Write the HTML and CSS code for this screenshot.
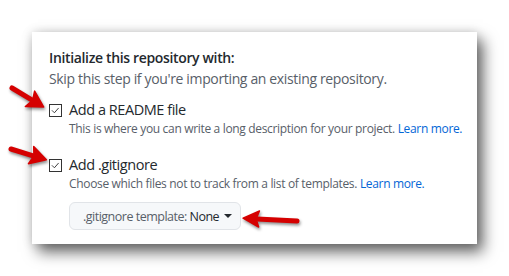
FILE: index.html
```html
<!DOCTYPE html>
<html>
<head>
<meta charset="utf-8">
<link rel="stylesheet" href="styles.css">
</head>
<body>
<div class="stage">
  <section class="panel">
    <h3 class="title">Initialize this repository with:</h3>
    <p class="sub">Skip this step if you're importing an existing repository.</p>
    <div class="option">
      <label class="option-row"><span class="box"><svg viewBox="0 0 13 13" width="13" height="13"><path d="M2.3 6.3 L5.2 9.2 L10.2 3.5" fill="none" stroke="#333" stroke-width="1.1"/></svg></span><span class="label">Add a README file</span></label>
      <p class="note">This is where you can write a long description for your project. <a href="#">Learn more.</a></p>
    </div>
    <div class="option option-second">
      <label class="option-row"><span class="box"><svg viewBox="0 0 13 13" width="13" height="13"><path d="M2.3 6.3 L5.2 9.2 L10.2 3.5" fill="none" stroke="#333" stroke-width="1.1"/></svg></span><span class="label">Add .gitignore</span></label>
      <p class="note">Choose which files not to track from a list of templates. <a href="#">Learn more.</a></p>
      <button class="select"><span class="muted">.gitignore template:</span> None <span class="caret"></span></button>
    </div>
  </section>
  <svg class="arrows" width="509" height="276" viewBox="0 0 509 276">
    <g transform="translate(12 88) rotate(31)">
      <path d="M0 0 L24 0" stroke="#d50000" stroke-width="5" stroke-linecap="round"/>
      <path d="M37 0 L21 -9 L24 0 L21 9 Z" fill="#d50000" stroke="#d50000" stroke-width="1.5" stroke-linejoin="round"/>
    </g>
    <g transform="translate(11 149) rotate(17)">
      <path d="M0 0 L24 0" stroke="#d50000" stroke-width="5" stroke-linecap="round"/>
      <path d="M37 0 L21 -9 L24 0 L21 9 Z" fill="#d50000" stroke="#d50000" stroke-width="1.5" stroke-linejoin="round"/>
    </g>
    <g transform="translate(297 221) rotate(183)">
      <path d="M0 0 L40 0" stroke="#d50000" stroke-width="5" stroke-linecap="round"/>
      <path d="M54 0 L38 -8 L41 0 L38 8 Z" fill="#d50000" stroke="#d50000" stroke-width="1.5" stroke-linejoin="round"/>
    </g>
  </svg>
</div>
</body>
</html>
```
FILE: styles.css
```css
html, body {
  margin: 0;
  padding: 0;
  background: #ffffff;
}
.stage {
  position: relative;
  width: 509px;
  height: 276px;
  padding: 32px;
  box-sizing: border-box;
  font-family: "Open Sans", "Noto Sans", sans-serif;
}
.panel {
  width: 445px;
  height: 212px;
  box-sizing: border-box;
  background: #fff;
  padding: 15px 17px 0;
  box-shadow: 6px 8px 14px rgba(0,0,0,0.6), 0 0 10px rgba(0,0,0,0.15);
}
.title {
  margin: 0;
  font-size: 14px;
  font-weight: 600;
  line-height: 21px;
  color: #24292e;
  letter-spacing: -0.35px;
}
.sub {
  margin: 0;
  font-size: 14px;
  line-height: 21px;
  color: #586069;
  letter-spacing: -0.35px;
}
.option {
  margin-top: 11px;
}
.option-second {
  margin-top: 17px;
}
.option-row {
  display: flex;
  align-items: center;
  gap: 7px;
  height: 20px;
}
.box {
  width: 13px;
  height: 13px;
  display: block;
}
.box svg {
  display: block;
  box-sizing: border-box;
  border: 1px solid #333;
  background: #fff;
}
.label {
  font-size: 14.5px;
  line-height: 20px;
  color: #24292e;
  letter-spacing: -0.45px;
}
.note {
  margin: 0 0 0 20px;
  font-size: 12px;
  line-height: 18px;
  color: #586069;
  letter-spacing: -0.33px;
  white-space: nowrap;
}
.note a {
  color: #0366d6;
  text-decoration: none;
}
.select {
  margin: 9px 0 0 20px;
  width: 172px;
  height: 28px;
  border: 1px solid #e1e4e8;
  border-radius: 6px;
  background: #f6f8fa;
  font-family: inherit;
  font-size: 12.5px;
  color: #24292e;
  letter-spacing: -0.5px;
  padding: 0 12px 0 13px;
  display: flex;
  align-items: center;
  white-space: pre;
}
.muted {
  color: #586069;
}
.caret {
  display: inline-block;
  width: 0;
  height: 0;
  border-left: 4px solid transparent;
  border-right: 4px solid transparent;
  border-top: 4px solid #24292e;
  margin-left: 2px;
}
.arrows {
  position: absolute;
  left: 0;
  top: 0;
  pointer-events: none;
  filter: drop-shadow(1px 2px 1.5px rgba(0,0,0,0.45));
}
```
